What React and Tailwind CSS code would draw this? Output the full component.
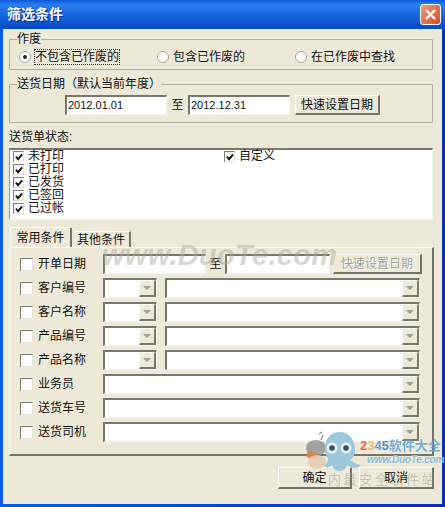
const font = '"Liberation Sans", "Noto Sans CJK SC", sans-serif'

function Check({checked, small}){
    return(
        <span className={(small ? "w-[11px] h-[11px]" : "w-[13px] h-[13px]") + " shrink-0 flex items-center justify-center bg-white border border-t-[#7f7d72] border-l-[#7f7d72] border-r-[#e6e3d6] border-b-[#e6e3d6]"}>
            {checked && (
                <svg width="8" height="8" viewBox="0 0 9 9">
                    <path d="M1 4 L3.5 7 L8 1.5" fill="none" stroke="#111" strokeWidth="2.2"/>
                </svg>
            )}
        </span>
    )
}

function Radio({selected, label, focus, className}){
    return(
        <div className={"flex items-center gap-[3px] " + className}>
            <span className="w-[12px] h-[12px] rounded-full bg-white border border-[#a8a698] flex items-center justify-center">
                {selected && <span className="w-[4px] h-[4px] rounded-full bg-[#222]"></span>}
            </span>
            <span className={focus ? "border border-dotted border-[#333] leading-[14px]" : "ml-[1px] leading-[14px]"}>{label}</span>
        </div>
    )
}

function Sunken({className, children}){
    return(
        <div className={"h-full bg-white border-t-2 border-l-2 border-t-[#7a786c] border-l-[#7a786c] border-b border-r border-b-[#f6f4ea] border-r-[#f6f4ea] " + className}>
            {children}
        </div>
    )
}

function Combo({className}){
    return(
        <Sunken className={"flex justify-end " + className}>
            <div className="w-[17px] h-full bg-[#ece9d8] border-r-2 border-b-2 border-r-[#7a786c] border-b-[#7a786c] border-t border-l border-t-white border-l-white flex items-center justify-center">
                <span className="w-0 h-0 border-x-[4px] border-x-transparent border-t-[4px] border-t-[#a09e92]"></span>
            </div>
        </Sunken>
    )
}

function Raised({className, children}){
    return(
        <div className={"flex items-center justify-center bg-[#ece9d8] border-t border-l border-t-white border-l-white border-r-2 border-b-2 border-r-[#75736a] border-b-[#75736a] " + className}>
            {children}
        </div>
    )
}

function Row({label, children}){
    return(
        <div className="h-[20px] flex items-center">
            <div className="ml-[10px] flex items-center w-[83px]">
                <Check/>
                <span className="ml-[5px]">{label}</span>
            </div>
            {children}
        </div>
    )
}

function Mascot(){
    return(
        <svg width="62" height="42" viewBox="0 0 62 42" className="blur-[0.5px]">
            <path d="M16 4 l3 -2 M18 10 l2 -5" stroke="#8a9aa6" strokeWidth="1.5" fill="none"/>
            <ellipse cx="13" cy="18" rx="10" ry="8" fill="#8d8f92" opacity="0.8"/>
            <ellipse cx="9" cy="25" rx="6" ry="4" fill="#d9824a" opacity="0.85"/>
            <ellipse cx="14" cy="32" rx="9" ry="7" fill="#e3cdb2" opacity="0.85"/>
            <path d="M22 20 C22 6 30 2 37 2 C46 2 52 10 52 20 C52 25 50 28 47 30 C51 32 54 35 58 35 C54 39 48 38 44 35 C43 39 40 41 36 41 C32 41 30 38 29 35 C26 38 23 38 21 36 C24 34 25 31 25 28 C23 26 22 23 22 20 Z" fill="#9cc6da"/>
            <circle cx="29" cy="18" r="5.5" fill="#e8f2f6"/>
            <circle cx="43" cy="18" r="5.5" fill="#e8f2f6"/>
            <circle cx="29" cy="18" r="2.8" fill="#3c4c58"/>
            <circle cx="43" cy="18" r="2.8" fill="#3c4c58"/>
        </svg>
    )
}

function App(){
    const states = ["未打印", "已打印", "已发货", "已签回", "已过帐"]
    const doubleCombos = ["客户编号", "客户名称", "产品编号", "产品名称"]
    const singleCombos = ["业务员", "送货车号", "送货司机"]

    return(
        <div className="relative w-[445px] h-[507px] overflow-hidden flex flex-col text-[12px] text-[#111] bg-gradient-to-r from-[#0a5ae6] to-[#0a2fb8]" style={{fontFamily: font}}>
            {/* title bar */}
            <div className="h-[29px] shrink-0 pl-[7px] pr-[4px] flex items-center justify-between bg-gradient-to-b from-[#0a58d8] via-[#2a7df0] via-15% to-[#0448c8]">
                <span className="text-white font-bold text-[14px] [text-shadow:1px_1px_1px_#0a2a80]">筛选条件</span>
                <div className="w-[21px] h-[21px] rounded-[3px] border border-white bg-gradient-to-br from-[#ec9a80] to-[#cf4a22] flex items-center justify-center">
                    <svg width="13" height="13" viewBox="0 0 13 13">
                        <path d="M2 2 L11 11 M11 2 L2 11" stroke="#fff" strokeWidth="2.4"/>
                    </svg>
                </div>
            </div>

            {/* dialog body */}
            <div className="ml-[3px] mr-[3px] mb-[3px] flex-1 bg-[#ece9d8] pt-[3px] pl-[6px]">
                <fieldset className="w-[424px] h-[38px] border border-[#b3b0a0] rounded-[1px]">
                    <legend className="ml-[7px] leading-[14px] h-[14px]">作度</legend>
                    <div className="h-[22px] flex items-center pl-[9px]">
                        <Radio selected focus label="不包含已作废的" className="w-[138px]"/>
                        <Radio label="包含已作废的" className="w-[138px]"/>
                        <Radio label="在已作废中查找"/>
                    </div>
                </fieldset>

                <fieldset className="mt-[7px] w-[424px] h-[46px] border border-[#b3b0a0] rounded-[1px]">
                    <legend className="ml-[7px] leading-[14px] h-[14px]">送货日期（默认当前年度）</legend>
                    <div className="mt-[4px] h-[20px] flex items-center pl-[55px] text-[11px]">
                        <Sunken className="w-[102px] leading-[17px] pl-[1px]">2012.01.01</Sunken>
                        <span className="w-[21px] text-center text-[12px]">至</span>
                        <Sunken className="w-[102px] leading-[17px] pl-[1px]">2012.12.31</Sunken>
                        <Raised className="ml-[5px] w-[85px] h-[20px] text-[12px]">快速设置日期</Raised>
                    </div>
                </fieldset>

                <div className="mt-[7px] h-[14px] leading-[14px]">送货单状态:</div>

                <div className="mt-[4px] w-[424px] h-[72px] bg-white border-t-2 border-l border-t-[#7a786c] border-l-[#9a988c] border-r border-b border-r-[#f6f4ea] border-b-[#f6f4ea] pl-[3px] flex">
                    <div className="w-[211px]">
                        {states.map((s) => (
                            <div key={s} className="h-[13px] flex items-center gap-[4px] leading-[13px]">
                                <Check checked small/>
                                <span>{s}</span>
                            </div>
                        ))}
                    </div>
                    <div className="h-[13px] flex items-center gap-[4px] leading-[13px]">
                        <Check checked small/>
                        <span>自定义</span>
                    </div>
                </div>

                {/* tabs */}
                <div className="mt-[8px] h-[19px] flex items-end pl-[1px]">
                    <div className="w-[62px] h-[20px] z-10 bg-[#ece9d8] border-t border-l border-t-white border-l-white border-r-2 border-r-[#75736a] rounded-t-[2px] flex items-center justify-center">常用条件</div>
                    <div className="ml-[1px] w-[58px] h-[16px] border-t border-t-white border-r-2 border-r-[#75736a] rounded-t-[2px] flex items-center justify-center">其他条件</div>
                </div>
                <div className="w-[425px] h-[209px] pt-[6px] flex flex-col gap-[4px] border-t border-l border-t-white border-l-white border-r-2 border-b-2 border-r-[#75736a] border-b-[#75736a]">
                    <Row label="开单日期">
                        <Sunken className="w-[103px]"></Sunken>
                        <span className="w-[19px] text-center">至</span>
                        <Sunken className="w-[105px]"></Sunken>
                        <Raised className="ml-[3px] w-[89px] h-[20px] text-[#a5a397] [text-shadow:1px_1px_0_#fff]">快速设置日期</Raised>
                    </Row>
                    {doubleCombos.map((label) => (
                        <Row key={label} label={label}>
                            <Combo className="w-[54px]"/>
                            <Combo className="ml-[8px] w-[255px]"/>
                        </Row>
                    ))}
                    {singleCombos.map((label) => (
                        <Row key={label} label={label}>
                            <Combo className="w-[317px]"/>
                        </Row>
                    ))}
                </div>

                <div className="mt-[11px] w-[425px] flex justify-end gap-[7px]">
                    <Raised className="w-[74px] h-[22px]">确定</Raised>
                    <Raised className="w-[75px] h-[22px]">取消</Raised>
                </div>
            </div>

            {/* site watermark and logo lie over the dialog */}
            <div className="absolute left-[102px] top-[238px] text-[29px] leading-[34px] tracking-[0.3px] font-bold italic text-[#a8a69a]/45 blur-[0.6px]">www.DuoTe.com</div>
            <div className="absolute left-[303px] top-[430px]"><Mascot/></div>
            <div className="absolute left-[360px] top-[439px] h-[14px] flex items-center text-[13px] leading-[14px] font-bold blur-[0.3px]">
                <span className="text-[#e8604a]">2</span>
                <span className="text-[#e8c070]">3</span>
                <span className="text-[#6aa0d8]">4</span>
                <span className="text-[#4a90d0]">5</span>
                <span className="text-[#5aa0d8]/80">软件大全</span>
            </div>
            <div className="absolute left-[367px] top-[455px] text-[10px] leading-[10px] tracking-[-0.2px] font-bold italic text-[#8fbfdc]">www.DuoTe.com</div>
            <div className="absolute left-[328px] top-[473px] text-[13px] leading-[14px] tracking-[2.6px] text-[#8d8b80]/40 blur-[0.3px]">内最安全软件站</div>
        </div>
    )
}

export default App
